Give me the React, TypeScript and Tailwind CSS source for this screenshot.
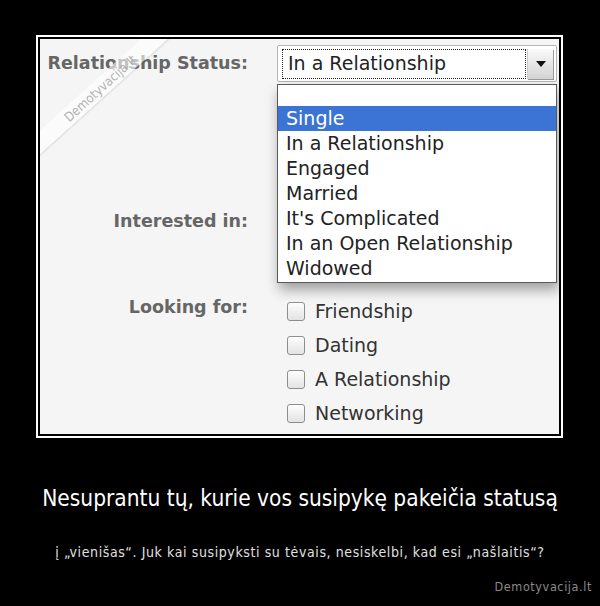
import React from "react";

const lucida = { fontFamily: '"DejaVu Sans", "Liberation Sans", sans-serif' };
const tahoma = { fontFamily: '"DejaVu Sans Condensed", "DejaVu Sans", "Liberation Sans", sans-serif' };

function Checkbox({ label }: { label: string }) {
  return (
    <div className="flex items-center h-[34px]">
      <div className="w-[18px] h-[19px] rounded-[3px] border border-[#8e8e8e] bg-gradient-to-b from-[#fdfdfd] to-[#e3e3e3] shadow-[inset_0_1px_1px_rgba(255,255,255,0.9)]" />
      <span className="ml-[10px] text-[19px] text-[#333] leading-none" style={lucida}>
        {label}
      </span>
    </div>
  );
}

export default function App() {
  const options = [
    "Single",
    "In a Relationship",
    "Engaged",
    "Married",
    "It's Complicated",
    "In an Open Relationship",
    "Widowed",
  ];
  return (
    <div className="w-[600px] h-[606px] bg-black overflow-hidden flex flex-col">
      <div className="ml-[36px] mt-[35px] w-[527px] h-[403px] border-2 border-white p-[2px] bg-black">
        <div className="relative w-full h-full bg-[#f5f5f5] overflow-hidden" style={lucida}>
          {/* Row 1 */}
          <div className="flex items-start pt-[6px]">
            <div className="w-[208px] h-[38px] flex items-center justify-end">
              <span className="text-[17.5px] font-bold text-[#666] leading-none">Relationship Status:</span>
            </div>
            <div className="relative ml-[29px]">
              <div className="w-[280px] h-[37px] border border-[#b5b5b5] bg-white flex items-center pl-[4px] pr-[3px] rounded-[2px]">
                <div className="w-[244px] h-[30px] border border-dotted border-[#222] flex items-center pl-[5px]">
                  <span className="text-[19px] text-[#222] leading-none">In a Relationship</span>
                </div>
                <div className="ml-auto w-[26px] h-[30px] bg-gradient-to-b from-[#fafafa] to-[#d4d4d4] border-l border-[#c8c8c8] shadow-[1px_1px_0_#9a9a9a] flex items-center justify-center">
                  <svg width="10" height="6" viewBox="0 0 10 6">
                    <path d="M0 0 L10 0 L5 6 Z" fill="#111" />
                  </svg>
                </div>
              </div>
              {/* dropdown */}
              <div className="absolute left-0 top-[39px] w-[280px] bg-white border border-[#5a5a5a] shadow-[2px_7px_12px_rgba(0,0,0,0.35)] pb-[1px]">
                <div className="h-[21px]" />
                {options.map((o, i) => (
                  <div
                    key={o}
                    className={
                      i === 0
                        ? "h-[25px] flex items-center pl-[8px] bg-[#3b74d4] text-white text-[19px] leading-none"
                        : "h-[25px] flex items-center pl-[8px] text-[#222] text-[19px] leading-none"
                    }
                  >
                    {o}
                  </div>
                ))}
              </div>
            </div>
          </div>
          {/* Interested in */}
          <div className="flex mt-[124px]">
            <div className="w-[208px] h-[30px] flex items-center justify-end">
              <span className="text-[17.5px] font-bold text-[#666] leading-none">Interested in:</span>
            </div>
          </div>
          {/* Looking for */}
          <div className="flex mt-[54px]">
            <div className="w-[208px] h-[34px] flex items-center justify-end">
              <span className="text-[17.5px] font-bold text-[#666] leading-none">Looking for:</span>
            </div>
            <div className="ml-[39px] flex flex-col pt-[3px]">
              <Checkbox label="Friendship" />
              <Checkbox label="Dating" />
              <Checkbox label="A Relationship" />
              <Checkbox label="Networking" />
            </div>
          </div>
          {/* watermark ribbon */}
          <div className="absolute left-[-32px] top-[40px] w-[184px] h-[18px] -rotate-[42deg] bg-white/60 shadow-[0_1px_2px_rgba(0,0,0,0.12)] flex items-center justify-center">
            <span className="text-[13px] text-[#a0a0a0]/80 leading-none" style={tahoma}>Demotyvacija.lt</span>
          </div>
        </div>
      </div>
      <div className="mt-[49px] text-center text-white text-[22.5px] leading-none" style={tahoma}>
        Nesuprantu tų, kurie vos susipykę pakeičia statusą
      </div>
      <div className="mt-[35px] text-center text-[#e0e0e0] text-[14px] leading-none tracking-[0.6px]" style={tahoma}>
        į „vienišas“. Juk kai susipyksti su tėvais, nesiskelbi, kad esi „našlaitis“?
      </div>
      <div className="mt-[22px] mr-[8px] text-right text-[#8a8a8a] text-[12.5px] leading-none tracking-[0.6px]" style={tahoma}>
        Demotyvacija.lt
      </div>
    </div>
  );
}
